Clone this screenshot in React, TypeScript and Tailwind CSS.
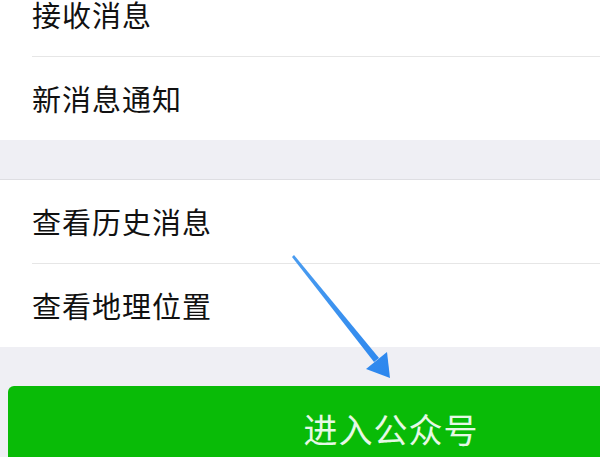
import React from "react";

const font = { fontFamily: '"Noto Sans CJK SC", "Noto Sans", sans-serif' };

function Row({ text }: { text: string }) {
  return (
    <div className="h-[83px] flex items-center pl-[32px] text-[29px] tracking-[1px] text-[#111]">
      {text}
    </div>
  );
}

function Divider() {
  return (
    <div className="pl-[32px] bg-white">
      <div className="h-px bg-[#e6e6e6]" />
    </div>
  );
}

export default function App() {
  return (
    <div className="relative w-[600px] h-[457px] overflow-hidden bg-[#efeff4]" style={font}>
      <div className="bg-white -mt-[27px]">
        <Row text="接收消息" />
        <Divider />
        <Row text="新消息通知" />
      </div>
      <div className="h-[40px] border-b border-[#dedee2]" />
      <div className="bg-white">
        <Row text="查看历史消息" />
        <Divider />
        <Row text="查看地理位置" />
      </div>
      <div className="h-[39px]" />
      <div className="ml-[8px] w-[766px] h-[84px] rounded-[6px] bg-[#09bb07] flex items-center justify-center text-[34px] text-white/90 tracking-[1px]">
        进入公众号
      </div>
      <svg className="absolute left-0 top-0" width="600" height="457" viewBox="0 0 600 457">
        <defs>
          <linearGradient id="ag" x1="293" y1="256" x2="390" y2="378" gradientUnits="userSpaceOnUse">
            <stop offset="0" stopColor="#4a9cf0" />
            <stop offset="1" stopColor="#2b86ee" />
          </linearGradient>
        </defs>
        <polygon points="292,257 294,255 379,358 374,362" fill="url(#ag)" />
        <polygon points="390,378 366,369 387,352" fill="url(#ag)" />
      </svg>
    </div>
  );
}
